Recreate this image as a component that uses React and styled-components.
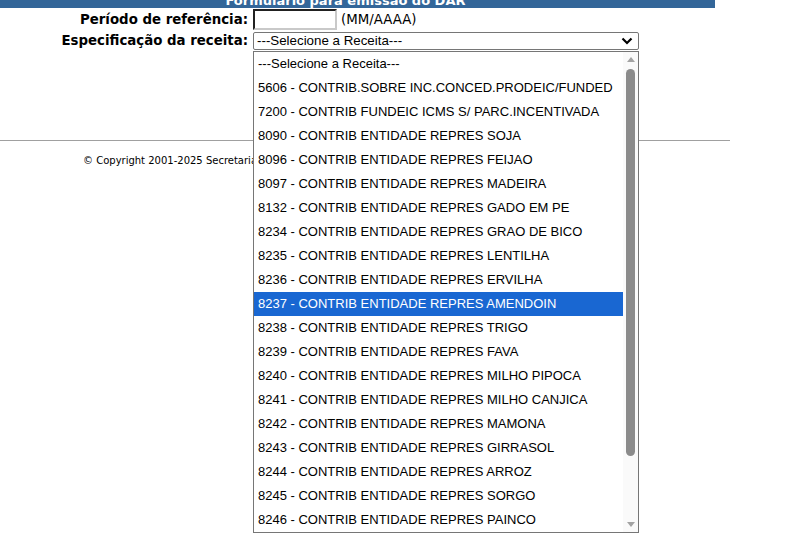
import React from "react";
import styled, { createGlobalStyle } from "styled-components";

const GlobalStyle = createGlobalStyle`
  html, body {
    margin: 0;
    padding: 0;
    background: #ffffff;
  }
  body {
    font-family: "DejaVu Sans", Verdana, sans-serif;
    color: #000;
  }
`;

const receitas = [
  "---Selecione a Receita---",
  "5606 - CONTRIB.SOBRE INC.CONCED.PRODEIC/FUNDED",
  "7200 - CONTRIB FUNDEIC ICMS S/ PARC.INCENTIVADA",
  "8090 - CONTRIB ENTIDADE REPRES SOJA",
  "8096 - CONTRIB ENTIDADE REPRES FEIJAO",
  "8097 - CONTRIB ENTIDADE REPRES MADEIRA",
  "8132 - CONTRIB ENTIDADE REPRES GADO EM PE",
  "8234 - CONTRIB ENTIDADE REPRES GRAO DE BICO",
  "8235 - CONTRIB ENTIDADE REPRES LENTILHA",
  "8236 - CONTRIB ENTIDADE REPRES ERVILHA",
  "8237 - CONTRIB ENTIDADE REPRES AMENDOIN",
  "8238 - CONTRIB ENTIDADE REPRES TRIGO",
  "8239 - CONTRIB ENTIDADE REPRES FAVA",
  "8240 - CONTRIB ENTIDADE REPRES MILHO PIPOCA",
  "8241 - CONTRIB ENTIDADE REPRES MILHO CANJICA",
  "8242 - CONTRIB ENTIDADE REPRES MAMONA",
  "8243 - CONTRIB ENTIDADE REPRES GIRRASOL",
  "8244 - CONTRIB ENTIDADE REPRES ARROZ",
  "8245 - CONTRIB ENTIDADE REPRES SORGO",
  "8246 - CONTRIB ENTIDADE REPRES PAINCO",
];

export default function App() {
  const selected = 10;

  return (
    <Page>
      <GlobalStyle />
      <TitleBar>
        <span>Formulário para emissão do DAR</span>
      </TitleBar>

      <FormGrid>
        <Label>Período de referência:</Label>
        <Field>
          <TextInput type="text" />
          <Hint>(MM/AAAA)</Hint>
        </Field>

        <Label>Especificação da receita:</Label>
        <Field>
          <SelectWrap>
            <SelectBox>
              <span>{receitas[0]}</span>
              <svg width="12" height="8" viewBox="0 0 12 8">
                <path
                  d="M1.5 1.5 L6 6 L10.5 1.5"
                  fill="none"
                  stroke="#000"
                  strokeWidth="2.2"
                />
              </svg>
            </SelectBox>

            <DropList>
              <Options>
                {receitas.map((r, i) => (
                  <Option key={r} $active={i === selected}>
                    {r}
                  </Option>
                ))}
              </Options>
              <ScrollBar>
                <Arrow>
                  <svg width="8" height="5" viewBox="0 0 8 5">
                    <path d="M0 5 L4 0 L8 5 Z" fill="#a3a3a3" />
                  </svg>
                </Arrow>
                <Track>
                  <Thumb />
                </Track>
                <Arrow>
                  <svg width="8" height="5" viewBox="0 0 8 5">
                    <path d="M0 0 L8 0 L4 5 Z" fill="#a3a3a3" />
                  </svg>
                </Arrow>
              </ScrollBar>
            </DropList>
          </SelectWrap>
        </Field>
      </FormGrid>

      <Rule />
      <Footer>© Copyright 2001-2025 Secretaria de Estado de Fazenda</Footer>
    </Page>
  );
}

const Page = styled.div`
  width: 808px;
  height: 547px;
  overflow: hidden;
`;

const TitleBar = styled.div`
  width: 715px;
  height: 8px;
  overflow: hidden;
  background: #336699;
  color: #ffffff;
  font-weight: bold;
  font-size: 13px;
  line-height: 13px;
  text-align: center;

  span {
    display: block;
    margin-top: -6px;
    padding-right: 24px;
  }
`;

const FormGrid = styled.div`
  display: grid;
  grid-template-columns: 248px auto;
  column-gap: 5px;
  row-gap: 1px;
  margin-top: 1px;
  align-items: center;
`;

const Label = styled.div`
  text-align: right;
  font-weight: bold;
  font-size: 13.33px;
  line-height: 19px;
  white-space: nowrap;
`;

const Field = styled.div`
  display: flex;
  align-items: center;
  gap: 4px;
`;

const TextInput = styled.input`
  box-sizing: border-box;
  width: 84px;
  height: 21px;
  margin: 0;
  padding: 1px 2px;
  border: 2px inset #767676;
  border-color: #767676 #c9c9c9 #c9c9c9 #767676;
  background: #fff;
  font-size: 13px;
`;

const Hint = styled.span`
  font-size: 13.33px;
  line-height: 19px;
`;

const SelectWrap = styled.div`
  position: relative;
  width: 386px;
`;

const SelectBox = styled.div`
  box-sizing: border-box;
  height: 18px;
  border: 1px solid #767676;
  border-radius: 2px;
  display: flex;
  align-items: center;
  justify-content: space-between;
  padding: 0 5px 0 3px;
  font-family: "Liberation Sans", Arial, sans-serif;
  font-size: 13.33px;
  background: #fff;

  svg {
    display: block;
  }
`;

const DropList = styled.div`
  position: absolute;
  top: 19px;
  left: 0;
  width: 386px;
  height: 482px;
  box-sizing: border-box;
  border: 1px solid #767676;
  background: #fff;
  display: flex;
  z-index: 10;
`;

const Options = styled.ul`
  list-style: none;
  margin: 0;
  padding: 0;
  flex: 1;
  overflow: hidden;
`;

const Option = styled.li`
  height: 24px;
  line-height: 24px;
  padding-left: 4px;
  font-family: "Liberation Sans", Arial, sans-serif;
  font-size: 13px;
  white-space: nowrap;
  background: ${(p) => (p.$active ? "#1967d2" : "transparent")};
  color: ${(p) => (p.$active ? "#ffffff" : "#000000")};
`;

const ScrollBar = styled.div`
  width: 15px;
  background: #fafafa;
  display: flex;
  flex-direction: column;
  align-items: center;
`;

const Arrow = styled.div`
  height: 15px;
  display: flex;
  align-items: center;
  justify-content: center;

  svg {
    display: block;
  }
`;

const Track = styled.div`
  flex: 1;
  width: 100%;
  display: flex;
  justify-content: center;
  padding-top: 2px;
`;

const Thumb = styled.div`
  width: 9px;
  height: 387px;
  border-radius: 5px;
  background: #8b8b8b;
`;

const Rule = styled.hr`
  width: 730px;
  margin: 90px 0 0 0;
  border: none;
  border-top: 1px solid #a0a0a0;
  height: 0;
`;

const Footer = styled.div`
  margin-top: 13px;
  padding-left: 83px;
  font-size: 10px;
  line-height: 14px;
`;
